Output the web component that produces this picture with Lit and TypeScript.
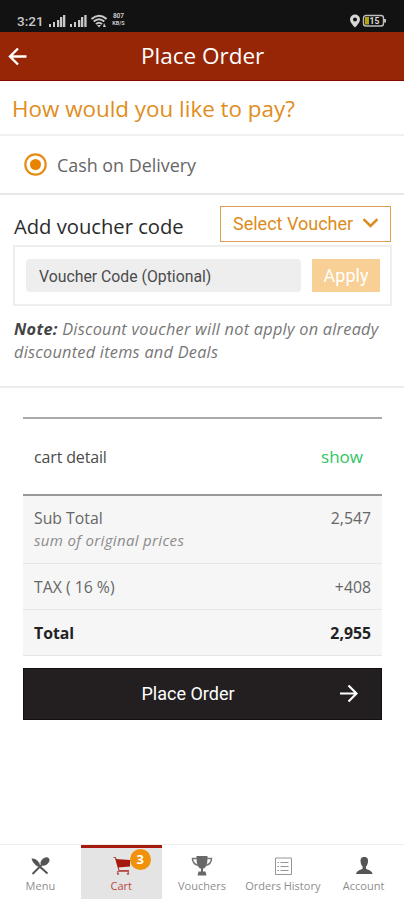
import { LitElement, html, css, svg } from "lit";
import { customElement } from "lit/decorators.js";

const back = svg`<path d="M18.500 9.500H2M10 1.500L2 9.500L10 17.500" fill="none" stroke="#fff" stroke-width="2.400"/>`;

@customElement("status-bar")
class StatusBar extends LitElement {
  static styles = css`
    :host { display: flex; height: 32px; box-sizing: border-box; padding: 9px 17px 0 17px; background: #121212; color: #c9c9c9; align-items: flex-start; font-family: Roboto, sans-serif; }
    .time { font-size: 13.500px; line-height: 24px; width: 32px; font-weight: 500; }
    svg { display: block; }
    .signals { margin-top: 5px; }
    .speed { font-size: 6.500px; line-height: 7px; font-weight: 700; margin: 4px 0 0 4px; text-align: center; width: 15px; display: flex; flex-direction: column; }
    .unit { font-size: 5.500px; }
    .right { margin: 5px 1px 0 auto; }
  `;
  render() {
    return html`
      <div class="time">3:21</div>
      <svg class="signals" width="58" height="14" viewBox="0 0 58 14" fill="#c9c9c9">
        <path d="M0 10h2v3H0zM4 8h2v5H4zM8 6h2.300v7H8zM11 3h2.300v10h-2.300zM14 1h2.300v12h-2.300zM21 10h2v3h-2zM25 8h2v5h-2zM29 6h2.300v7h-2.300zM32 3h2.300v10h-2.300zM35.300 1h2.300v12h-2.300z"/>
        <g fill="none" stroke="#c9c9c9" stroke-width="2"><path d="M42.500 5Q50 -1.500 57.500 5M44.700 7.600Q50 3 55.300 7.600M47 10Q50 7.500 53 10"/></g>
        <path d="M48 11l2 2.500 2-2.500zM55 9l2 4h-3z"/>
      </svg>
      <div class="speed"><span>807</span><span class="unit">KB/S</span></div>
      <svg class="right" width="37" height="14" viewBox="0 0 37 14">
        <path fill="#d6d6d6" fill-rule="evenodd" d="M6 .5a5 5 0 0 0-5 5C1 9 6 13.500 6 13.500S11 9 11 5.500a5 5 0 0 0-5-5zM6 3.500a2 2 0 1 1 0 4 2 2 0 0 1 0-4z"/>
        <rect x="14.500" y="1.500" width="20" height="10.500" rx="2.500" fill="none" stroke="#bdbdbd" stroke-width="1.400"/>
        <path fill="#b3a514" d="M16 3h4v7.500h-4z"/><path fill="#bdbdbd" d="M35 5h2v3.500h-2z"/>
        <text x="20.500" y="10" font-size="8.500" font-weight="700" font-family="Roboto, sans-serif" fill="#ddd">15</text>
      </svg>`;
  }
}

@customElement("tab-bar")
class TabBar extends LitElement {
  static styles = css`
    :host { display: flex; height: 56px; box-sizing: border-box; border-top: 1px solid #eee; background: #fff; font-family: "Open Sans", sans-serif; }
    .tab { flex: 1 1 0; min-width: 0; height: 54px; box-sizing: border-box; border-top: 3px solid transparent; display: flex; flex-direction: column; align-items: center; padding-top: 7px; color: #8e8e8e; font-size: 11px; line-height: 16px; white-space: nowrap; position: relative; }
    .active { background: #e4e4e4; border-color: #a5190e; color: #b84942; }
    svg { display: block; width: 22px; height: 22px; margin-bottom: 1px; }
    .badge { position: absolute; left: 49px; top: 1px; width: 21px; height: 21px; border-radius: 50%; background: #f1920c; color: #fff; font-weight: 700; font-size: 13px; line-height: 21px; text-align: center; }
  `;
  render() {
    return html`
      <div class="tab">
        <svg viewBox="0 0 22 22"><path d="M9 10l9.500 8.500" stroke="#555" stroke-width="2"/><path d="M2.500 3.500Q7 3 10 7.500l1 2-2.500 2-2-1.500Q3 7 2.500 3.500z" fill="#555"/><path d="M14 8.500L3.500 19" stroke="#555" stroke-width="1.900"/><ellipse cx="16" cy="6.500" rx="3.500" ry="5" transform="rotate(52 16 6.500)" fill="#555"/></svg>
        Menu
      </div>
      <div class="tab active">
        <svg viewBox="0 0 22 22"><path d="M3.500 2.500h2l3.500 13h10" fill="none" stroke="#b24840" stroke-width="1.200"/><path d="M5.500 4L20 5v6.500L8 12.500z" fill="#a5190e"/><path d="M7.500 18.500v-2h11v2" fill="none" stroke="#b9655f" stroke-width="1.100"/><circle cx="8" cy="18.800" r="1.200" fill="#b9655f"/><circle cx="18" cy="18.800" r="1.200" fill="#b9655f"/></svg>
        Cart<span class="badge">3</span>
      </div>
      <div class="tab">
        <svg viewBox="0 0 22 22"><path d="M5.500 1h11v2q0 8-3.500 10.500h-1v3h2.500l1 4h-9l1-4H10v-3H9Q5.500 11 5.500 3z" fill="#686868"/><path d="M6 3.500H1.500q0 5.500 6 7M16 3.500h4.500q0 5.500-6 7" fill="none" stroke="#777" stroke-width="1.600"/></svg>
        Vouchers
      </div>
      <div class="tab">
        <svg viewBox="0 0 22 22"><g fill="none" stroke="#969696"><path d="M3.500 3h16v16.500h-16z"/><path d="M8.500 7.500h8M8.500 11.500h8M8.500 15.500h8M5.500 7.500h1.500M5.500 11.500h1.500M5.500 15.500h1.500"/></g></svg>
        Orders History
      </div>
      <div class="tab">
        <svg viewBox="0 0 22 22"><path d="M11.300 2c-3 0-4 2-3.700 4.500.2 2.500 1 4 2 5v2c-1 1.500-6 1.500-6.600 5.500h16.600c-.6-4-5.600-4-6.600-5.500v-2c1-1 1.800-2.500 2-5C15.300 4 14.300 2 11.300 2z" fill="#555"/></svg>
        Account
      </div>`;
  }
}

@customElement("app-root")
class AppRoot extends LitElement {
  static styles = css`
    :host { display: flex; flex-direction: column; width: 404px; height: 900px; background: #fff; overflow: hidden; font-family: "Open Sans", sans-serif; color: #4b4b4b; white-space: nowrap; }
    * { box-sizing: border-box; }
    svg { display: block; flex: none; }
    .header { height: 49px; background: #962605; border-bottom: 1px solid #850a03; display: flex; align-items: center; padding-left: 8px; color: #fff; }
    .title { font-size: 22.500px; line-height: 30px; margin-left: 114px; }
    .question { height: 55px; border-bottom: 2px solid #f1f1f1; padding: 11px 0 0 12px; font-size: 22.400px; line-height: 34px; color: #df8d20; }
    .method { height: 59px; border-bottom: 2px solid #e8e8e8; display: flex; align-items: center; padding-left: 24px; gap: 10px; font-size: 17.900px; color: #666; }
    .voucher { height: 193px; border-bottom: 2px solid #ececec; padding: 11px 12px 0 13px; }
    .row { display: flex; justify-content: space-between; }
    .add { font-size: 20.200px; line-height: 28px; margin: 6px 0 0 1px; color: #2b2b2b; }
    .select { width: 171px; height: 36px; border: 1px solid #dda052; display: flex; align-items: center; justify-content: space-between; padding: 0 11px 2px 12px; color: #dc8b20; font-family: Roboto, sans-serif; font-size: 18px; margin-right: 1px; }
    .entry { height: 61px; margin-top: 3px; border: 2px solid #eee; display: flex; padding: 12px 10px 0 11px; gap: 11px; font-family: Roboto, sans-serif; }
    .input { width: 275px; height: 33px; border-radius: 4px; background: #eee; padding-left: 13px; font-size: 15.800px; line-height: 35px; color: #4b4b4b; }
    .apply { width: 68px; height: 33px; background: #f8cf94; color: #fff; text-align: center; font-size: 18px; line-height: 34px; }
    .note { font-size: 16.300px; letter-spacing: 0.260px; line-height: 23px; font-style: italic; margin: 12px 0 0 1px; color: #777; }
    .note b { color: #444; letter-spacing: 0.300px; }
    .summary { margin: 29px 22px 0 23px; }
    .detail { height: 79px; border-top: 2px solid #aaa; border-bottom: 2px solid #999; display: flex; justify-content: space-between; align-items: center; padding: 0 19px 0 11px; font-size: 16px; }
    .show { color: #2fc563; font-size: 17px; }
    .cart { letter-spacing: -0.150px; }
    .line { background: #f6f6f6; border-bottom: 1px solid #e6e6e6; display: flex; justify-content: space-between; align-items: center; height: 46px; padding: 0 11px; font-size: 15.800px; line-height: 22px; color: #666; }
    .sub { height: 68px; align-items: flex-start; padding-top: 11px; }
    .sub i { display: block; font-size: 15px; letter-spacing: 0.340px; color: #8b8b8b; }
    .total { font-weight: 700; color: #222; }
    .place { height: 52px; margin-top: 12px; background: #231f20; border: 1px solid #111; display: grid; grid-template-columns: 1fr auto 1fr; align-items: center; font-family: Roboto, sans-serif; font-size: 18px; color: #fff; padding: 0 23px 2px 0; }
    .label { grid-column: 2; margin-left: -6px; }
    .place svg { justify-self: end; }
    tab-bar { margin-top: auto; }
  `;
  render() {
    return html`
      <status-bar></status-bar>
      <div class="header"><svg width="19" height="19" viewBox="0 0 19 19">${back}</svg><div class="title">Place Order</div></div>
      <div class="question">How would you like to pay?</div>
      <div class="method">
        <svg width="23" height="23" viewBox="0 0 23 23"><circle cx="11.500" cy="11.500" r="10.200" fill="none" stroke="#e88c14" stroke-width="2.200"/><circle cx="11.500" cy="11.500" r="5.500" fill="#e88300"/></svg>
        <span>Cash on Delivery</span>
      </div>
      <div class="voucher">
        <div class="row">
          <div class="add">Add voucher code</div>
          <div class="select"><span>Select Voucher</span><svg width="17" height="10" viewBox="0 0 17 10"><path d="M1.500 1.200l7 6.800 7-6.800" fill="none" stroke="#dc8b20" stroke-width="2.500"/></svg></div>
        </div>
        <div class="entry"><div class="input">Voucher Code (Optional)</div><div class="apply">Apply</div></div>
        <div class="note"><b>Note:</b> Discount voucher will not apply on already<br>discounted items and Deals</div>
      </div>
      <div class="summary">
        <div class="detail"><span class="cart">cart detail</span><span class="show">show</span></div>
        <div class="line sub"><div>Sub Total<i>sum of original prices</i></div><div>2,547</div></div>
        <div class="line"><span>TAX ( 16 %)</span><span>+408</span></div>
        <div class="line total"><span>Total</span><span>2,955</span></div>
        <div class="place"><span class="label">Place Order</span><svg width="19" height="19" viewBox="0 0 19 19"><path d="M1 9.500h16.500M9.500 1.500l8 8-8 8" fill="none" stroke="#fff" stroke-width="2.200"/></svg></div>
      </div>
      <tab-bar></tab-bar>`;
  }
}
